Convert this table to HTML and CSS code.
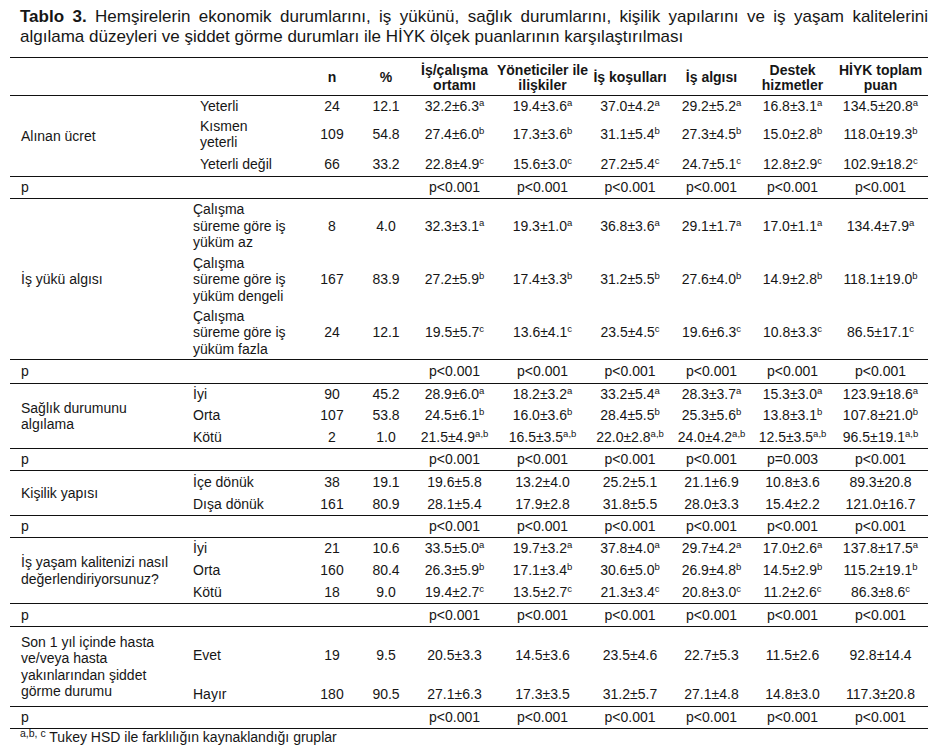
FILE: index.html
```html
<!DOCTYPE html>
<html lang="tr">
<head>
  <meta charset="UTF-8">
  <title>Tablo 3</title>
  <link rel="stylesheet" href="styles.css">
</head>
<body>
  <p class="caption"><b>Tablo 3.</b> Hemşirelerin ekonomik durumlarını, iş yükünü, sağlık durumlarını, kişilik yapılarını ve iş yaşam kalitelerini algılama düzeyleri ve şiddet görme durumları ile HİYK ölçek puanlarının karşılaştırılması</p>

  <table class="results">
    <colgroup>
      <col style="width:174px">
      <col style="width:121px">
      <col style="width:54px">
      <col style="width:54px">
      <col style="width:83px">
      <col style="width:93px">
      <col style="width:82px">
      <col style="width:81px">
      <col style="width:81px">
      <col style="width:95px">
    </colgroup>
    <thead>
      <tr class="head">
        <th></th>
        <th></th>
        <th>n</th>
        <th>%</th>
        <th>İş/çalışma ortamı</th>
        <th>Yöneticiler ile ilişkiler</th>
        <th>İş koşulları</th>
        <th>İş algısı</th>
        <th>Destek hizmetler</th>
        <th>HİYK toplam puan</th>
      </tr>
    </thead>
    <tbody>
      <!-- Alınan ücret -->
      <tr class="h20">
        <td class="label end" rowspan="3">Alınan ücret</td>
        <td class="sub wide">Yeterli</td>
        <td>24</td><td>12.1</td>
        <td>32.2±6.3<sup>a</sup></td><td>19.4±3.6<sup>a</sup></td><td>37.0±4.2<sup>a</sup></td>
        <td>29.2±5.2<sup>a</sup></td><td>16.8±3.1<sup>a</sup></td><td>134.5±20.8<sup>a</sup></td>
      </tr>
      <tr class="h36">
        <td class="sub wide">Kısmen<br>yeterli</td>
        <td>109</td><td>54.8</td>
        <td>27.4±6.0<sup>b</sup></td><td>17.3±3.6<sup>b</sup></td><td>31.1±5.4<sup>b</sup></td>
        <td>27.3±4.5<sup>b</sup></td><td>15.0±2.8<sup>b</sup></td><td>118.0±19.3<sup>b</sup></td>
      </tr>
      <tr class="h25 end">
        <td class="sub wide">Yeterli değil</td>
        <td>66</td><td>33.2</td>
        <td>22.8±4.9<sup>c</sup></td><td>15.6±3.0<sup>c</sup></td><td>27.2±5.4<sup>c</sup></td>
        <td>24.7±5.1<sup>c</sup></td><td>12.8±2.9<sup>c</sup></td><td>102.9±18.2<sup>c</sup></td>
      </tr>
      <tr class="h22 end">
        <td class="label">p</td><td></td><td></td><td></td>
        <td>p&lt;0.001</td><td>p&lt;0.001</td><td>p&lt;0.001</td><td>p&lt;0.001</td><td>p&lt;0.001</td><td>p&lt;0.001</td>
      </tr>

      <!-- İş yükü algısı -->
      <tr class="h54">
        <td class="label end" rowspan="3">İş yükü algısı</td>
        <td class="sub">Çalışma<br>süreme göre iş<br>yüküm az</td>
        <td>8</td><td>4.0</td>
        <td>32.3±3.1<sup>a</sup></td><td>19.3±1.0<sup>a</sup></td><td>36.8±3.6<sup>a</sup></td>
        <td>29.1±1.7<sup>a</sup></td><td>17.0±1.1<sup>a</sup></td><td>134.4±7.9<sup>a</sup></td>
      </tr>
      <tr class="h53">
        <td class="sub">Çalışma<br>süreme göre iş<br>yüküm dengeli</td>
        <td>167</td><td>83.9</td>
        <td>27.2±5.9<sup>b</sup></td><td>17.4±3.3<sup>b</sup></td><td>31.2±5.5<sup>b</sup></td>
        <td>27.6±4.0<sup>b</sup></td><td>14.9±2.8<sup>b</sup></td><td>118.1±19.0<sup>b</sup></td>
      </tr>
      <tr class="h54 end">
        <td class="sub">Çalışma<br>süreme göre iş<br>yüküm fazla</td>
        <td>24</td><td>12.1</td>
        <td>19.5±5.7<sup>c</sup></td><td>13.6±4.1<sup>c</sup></td><td>23.5±4.5<sup>c</sup></td>
        <td>19.6±6.3<sup>c</sup></td><td>10.8±3.3<sup>c</sup></td><td>86.5±17.1<sup>c</sup></td>
      </tr>
      <tr class="h24 end">
        <td class="label">p</td><td></td><td></td><td></td>
        <td>p&lt;0.001</td><td>p&lt;0.001</td><td>p&lt;0.001</td><td>p&lt;0.001</td><td>p&lt;0.001</td><td>p&lt;0.001</td>
      </tr>

      <!-- Sağlık durumunu algılama -->
      <tr class="h21">
        <td class="label end" rowspan="3">Sağlık durumunu<br>algılama</td>
        <td class="sub">İyi</td>
        <td>90</td><td>45.2</td>
        <td>28.9±6.0<sup>a</sup></td><td>18.2±3.2<sup>a</sup></td><td>33.2±5.4<sup>a</sup></td>
        <td>28.3±3.7<sup>a</sup></td><td>15.3±3.0<sup>a</sup></td><td>123.9±18.6<sup>a</sup></td>
      </tr>
      <tr class="h21">
        <td class="sub">Orta</td>
        <td>107</td><td>53.8</td>
        <td>24.5±6.1<sup>b</sup></td><td>16.0±3.6<sup>b</sup></td><td>28.4±5.5<sup>b</sup></td>
        <td>25.3±5.6<sup>b</sup></td><td>13.8±3.1<sup>b</sup></td><td>107.8±21.0<sup>b</sup></td>
      </tr>
      <tr class="h23 end">
        <td class="sub">Kötü</td>
        <td>2</td><td>1.0</td>
        <td>21.5±4.9<sup>a,b</sup></td><td>16.5±3.5<sup>a,b</sup></td><td>22.0±2.8<sup>a,b</sup></td>
        <td>24.0±4.2<sup>a,b</sup></td><td>12.5±3.5<sup>a,b</sup></td><td>96.5±19.1<sup>a,b</sup></td>
      </tr>
      <tr class="h22 end">
        <td class="label">p</td><td></td><td></td><td></td>
        <td>p&lt;0.001</td><td>p&lt;0.001</td><td>p&lt;0.001</td><td>p&lt;0.001</td><td>p=0.003</td><td>p&lt;0.001</td>
      </tr>

      <!-- Kişilik yapısı -->
      <tr class="h22">
        <td class="label end" rowspan="2">Kişilik yapısı</td>
        <td class="sub">İçe dönük</td>
        <td>38</td><td>19.1</td>
        <td>19.6±5.8</td><td>13.2±4.0</td><td>25.2±5.1</td>
        <td>21.1±6.9</td><td>10.8±3.6</td><td>89.3±20.8</td>
      </tr>
      <tr class="h23 end">
        <td class="sub">Dışa dönük</td>
        <td>161</td><td>80.9</td>
        <td>28.1±5.4</td><td>17.9±2.8</td><td>31.8±5.5</td>
        <td>28.0±3.3</td><td>15.4±2.2</td><td>121.0±16.7</td>
      </tr>
      <tr class="h22 end">
        <td class="label">p</td><td></td><td></td><td></td>
        <td>p&lt;0.001</td><td>p&lt;0.001</td><td>p&lt;0.001</td><td>p&lt;0.001</td><td>p&lt;0.001</td><td>p&lt;0.001</td>
      </tr>

      <!-- İş yaşam kalitesi -->
      <tr class="h21">
        <td class="label end" rowspan="3">İş yaşam kalitenizi nasıl<br>değerlendiriyorsunuz?</td>
        <td class="sub">İyi</td>
        <td>21</td><td>10.6</td>
        <td>33.5±5.0<sup>a</sup></td><td>19.7±3.2<sup>a</sup></td><td>37.8±4.0<sup>a</sup></td>
        <td>29.7±4.2<sup>a</sup></td><td>17.0±2.6<sup>a</sup></td><td>137.8±17.5<sup>a</sup></td>
      </tr>
      <tr class="h23">
        <td class="sub">Orta</td>
        <td>160</td><td>80.4</td>
        <td>26.3±5.9<sup>b</sup></td><td>17.1±3.4<sup>b</sup></td><td>30.6±5.0<sup>b</sup></td>
        <td>26.9±4.8<sup>b</sup></td><td>14.5±2.9<sup>b</sup></td><td>115.2±19.1<sup>b</sup></td>
      </tr>
      <tr class="h22 end">
        <td class="sub">Kötü</td>
        <td>18</td><td>9.0</td>
        <td>19.4±2.7<sup>c</sup></td><td>13.5±2.7<sup>c</sup></td><td>21.3±3.4<sup>c</sup></td>
        <td>20.8±3.0<sup>c</sup></td><td>11.2±2.6<sup>c</sup></td><td>86.3±8.6<sup>c</sup></td>
      </tr>
      <tr class="h23 end">
        <td class="label">p</td><td></td><td></td><td></td>
        <td>p&lt;0.001</td><td>p&lt;0.001</td><td>p&lt;0.001</td><td>p&lt;0.001</td><td>p&lt;0.001</td><td>p&lt;0.001</td>
      </tr>

      <!-- Şiddet görme -->
      <tr class="h56">
        <td class="label end" rowspan="2">Son 1 yıl içinde hasta<br>ve/veya hasta<br>yakınlarından şiddet<br>görme durumu</td>
        <td class="sub">Evet</td>
        <td>19</td><td>9.5</td>
        <td>20.5±3.3</td><td>14.5±3.6</td><td>23.5±4.6</td>
        <td>22.7±5.3</td><td>11.5±2.6</td><td>92.8±14.4</td>
      </tr>
      <tr class="h24 end">
        <td class="sub">Hayır</td>
        <td>180</td><td>90.5</td>
        <td>27.1±6.3</td><td>17.3±3.5</td><td>31.2±5.7</td>
        <td>27.1±4.8</td><td>14.8±3.0</td><td>117.3±20.8</td>
      </tr>
      <tr class="h22 end">
        <td class="label">p</td><td></td><td></td><td></td>
        <td>p&lt;0.001</td><td>p&lt;0.001</td><td>p&lt;0.001</td><td>p&lt;0.001</td><td>p&lt;0.001</td><td>p&lt;0.001</td>
      </tr>
    </tbody>
  </table>

  <p class="note"><sup>a,b, c</sup> Tukey HSD ile farklılığın kaynaklandığı gruplar</p>
</body>
</html>
```

FILE: styles.css
```css
body {
  margin: 0;
  background-color: #fff;
  color: #161616;
  font-family: 'Liberation Sans', Arial, sans-serif;
}

.caption {
  width: 908px;
  margin: 0;
  padding: 7px 0 0 20px;
  font-size: 17px;
  line-height: 20px;
  text-align: justify;
}

.results {
  margin: 10px 0 0 10px;
  width: 918px;
  table-layout: fixed;
  border-collapse: separate;
  border-spacing: 0;
  border-top: 1px solid #111;
  font-size: 14px;
  line-height: 16.5px;
}

.results th,
.results td {
  padding: 0;
  text-align: center;
  vertical-align: middle;
  white-space: nowrap;
}

.results th {
  font-weight: bold;
  white-space: normal;
  line-height: 15px;
  border-bottom: 1px solid #111;
  padding-top: 2px;
}

.head { height: 38px; }

.results td.label {
  text-align: left;
  padding-left: 11px;
}

.results td.sub {
  text-align: left;
  padding-left: 9px;
}

.results td.sub.wide { padding-left: 16px; }

.results tr.end td,
.results td.end {
  border-bottom: 1px solid #111;
}

.h20 { height: 20px; }
.h21 { height: 21px; }
.h22 { height: 22px; }
.h23 { height: 23px; }
.h24 { height: 24px; }
.h25 { height: 25px; }
.h36 { height: 36px; }
.h53 { height: 53px; }
.h54 { height: 54px; }
.h56 { height: 56px; }

sup {
  font-size: 9.5px;
  line-height: 0;
  vertical-align: 5px;
}

.note {
  margin: 0 0 0 20px;
  font-size: 14px;
  line-height: 16px;
}

.note sup {
  font-size: 10.5px;
}
```
